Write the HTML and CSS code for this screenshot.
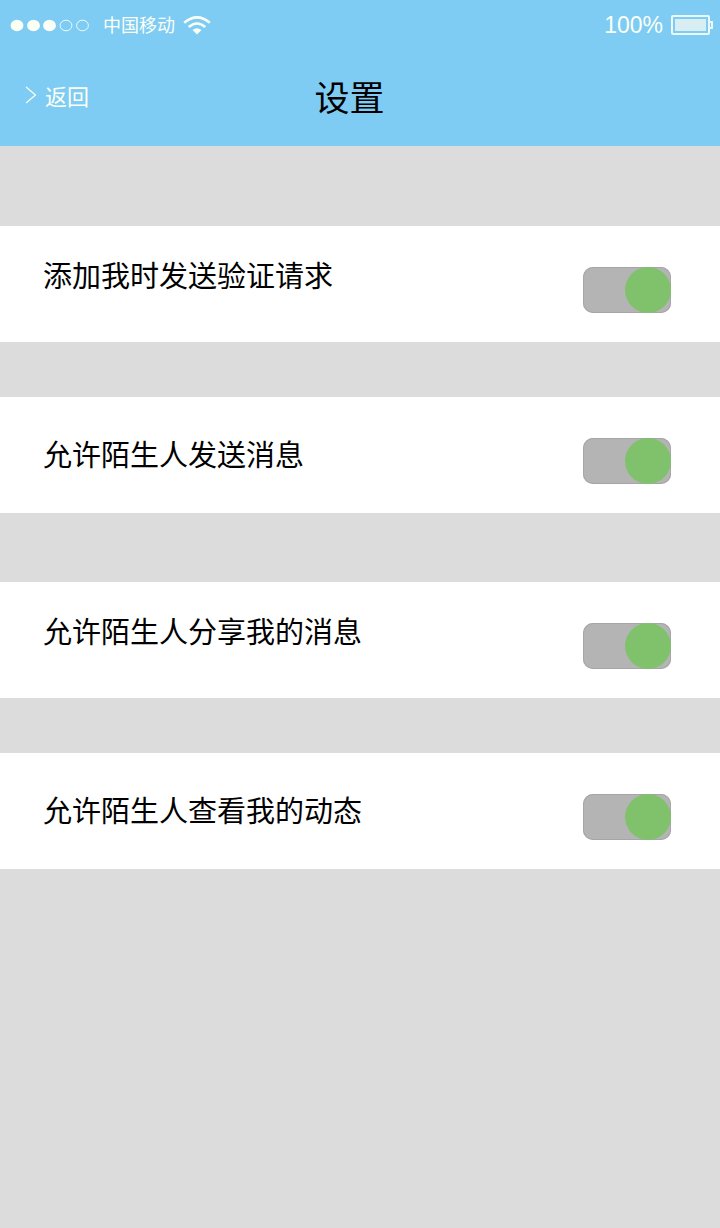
FILE: index.html
```html
<!DOCTYPE html>
<html lang="zh-CN">
<head>
    <meta charset="UTF-8">
    <meta name="viewport" content="width=device-width, initial-scale=1.0">
    <title>设置</title>
    <link rel="stylesheet" href="styles.css">
</head>
<body>
    <header class="header">
        <div class="status-bar">
            <svg class="signal" width="80" height="14" viewBox="0 0 80 14">
                <g fill="#fbfff6">
                    <ellipse cx="7" cy="7.500" rx="6.4" ry="5.8"/>
                    <ellipse cx="23.500" cy="7.500" rx="6.4" ry="5.8"/>
                    <ellipse cx="39.500" cy="7.500" rx="6.4" ry="5.8"/>
                </g>
                <g fill="none" stroke="#eefcfa" stroke-width="1">
                    <ellipse cx="56" cy="7.500" rx="5.9" ry="5.3"/>
                    <ellipse cx="72.500" cy="7.500" rx="5.9" ry="5.3"/>
                </g>
            </svg>
            <span class="carrier">中国移动</span>
            <svg class="wifi" width="28" height="20" viewBox="0 0 28 20">
                <g fill="none" stroke="#fbfff6" stroke-width="2.600">
                    <path d="M1.200 7.700 Q14 -3 26.800 7.700"/>
                    <path d="M5.700 12 Q14 5 22.300 12"/>
                </g>
                <path d="M9.500 15 Q14 11.500 18.500 15 L14 19.500 Z" fill="#fbfff6"/>
            </svg>
            <span class="percent">100%</span>
            <svg class="battery" width="43" height="22" viewBox="0 0 43 22">
                <rect x="1" y="2" width="37" height="18" rx="1" fill="none" stroke="#eaf8fa" stroke-width="2"/>
                <rect x="4" y="5" width="31" height="12" fill="#d9eef3"/>
                <path d="M38 8 H41 V14 H38" fill="none" stroke="#eaf8fa" stroke-width="2"/>
            </svg>
        </div>
        <nav class="nav">
            <a class="back" href="#">
                <svg width="12" height="18" viewBox="0 0 12 18">
                    <path d="M1 1 L10.500 9 L1 17" fill="none" stroke="#fbfff6" stroke-width="1.200"/>
                </svg>
                返回
            </a>
            <h1>设置</h1>
        </nav>
    </header>

    <form class="settings">
        <div class="row row-high">
            <label for="verify">添加我时发送验证请求</label>
            <input type="checkbox" class="toggle" id="verify" checked>
        </div>
        <div class="row">
            <label for="message">允许陌生人发送消息</label>
            <input type="checkbox" class="toggle" id="message" checked>
        </div>
        <div class="row row-high row-group">
            <label for="share">允许陌生人分享我的消息</label>
            <input type="checkbox" class="toggle" id="share" checked>
        </div>
        <div class="row">
            <label for="activity">允许陌生人查看我的动态</label>
            <input type="checkbox" class="toggle" id="activity" checked>
        </div>
    </form>
</body>
</html>
```

FILE: styles.css
```css
body {
    margin: 0;
    background-color: #dcdcdc;
    font-family: "Liberation Sans", "Noto Sans CJK SC", sans-serif;
    color: #000;
}
.header {
    background-color: #7eccf4;
    color: #fbfff6;
}
.status-bar {
    display: flex;
    align-items: center;
    height: 50px;
    padding: 0 6px 0 10px;
}
.carrier {
    margin: 0 8px 0 13px;
    padding-bottom: 2px;
    font-size: 18px;
}
.percent {
    margin-left: auto;
    margin-right: 8px;
    font-size: 23px;
}
.nav {
    display: grid;
    grid-template-columns: 1fr auto 1fr;
    align-items: center;
    height: 90px;
    padding: 0 46px 6px 25px;
}
.back {
    display: flex;
    align-items: center;
    gap: 8px;
    color: #fbfff6;
    font-size: 22px;
    text-decoration: none;
}
h1 {
    margin: 0;
    color: #000;
    font-size: 35px;
    font-weight: 400;
}
.settings {
    display: flex;
    flex-direction: column;
    gap: 55px;
    padding: 80px 0;
}
.row {
    display: flex;
    align-items: flex-start;
    justify-content: space-between;
    min-height: 75px;
    padding: 41px 49px 0 43px;
    background-color: #fff;
}
.row label {
    font-size: 29px;
    line-height: 36px;
}
.row-high label {
    margin-top: -8px;
}
.row-group {
    margin-top: 14px;
}
.toggle {
    appearance: none;
    display: flex;
    justify-content: flex-end;
    flex-shrink: 0;
    width: 88px;
    height: 46px;
    margin: 0;
    border-radius: 10px;
    background-color: #b4b4b4;
    box-shadow: inset 0 0 0 1px #a6a6a6;
    cursor: pointer;
}
.toggle::before {
    content: "";
    width: 46px;
    height: 46px;
    border-radius: 50%;
    background-color: #fff;
}
.toggle:not(:checked) {
    justify-content: flex-start;
}
.toggle:checked::before {
    background-color: #80c26b;
}
```
